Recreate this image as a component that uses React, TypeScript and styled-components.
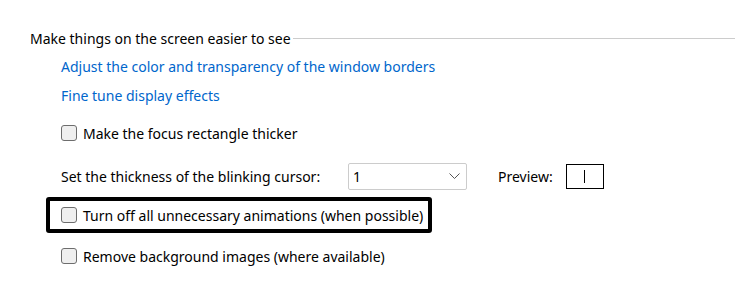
import React, { useState } from 'react';
import styled, { createGlobalStyle } from 'styled-components';

const GlobalStyle = createGlobalStyle`
    body {
        margin: 0;
        background: #ffffff;
        font-family: 'Noto Sans', 'Open Sans', sans-serif;
        font-size: 14px;
        color: #000000;
    }
`;

const Page = styled.div`
    width: 746px;
    height: 289px;
    padding: 28px 11px 0 30px;
    box-sizing: border-box;
`;

const SectionHeader = styled.div`
    display: flex;
    align-items: center;
    gap: 2px;
    height: 20px;
`;

const SectionTitle = styled.span`
    white-space: nowrap;
`;

const Rule = styled.div`
    flex: 1;
    height: 1px;
    background: #cccccc;
`;

const Body = styled.div`
    display: flex;
    flex-direction: column;
    padding-left: 31px;
`;

const Link = styled.a<{ $top: number }>`
    color: #0066cc;
    text-decoration: none;
    height: 20px;
    line-height: 20px;
    margin-top: ${(p) => p.$top}px;
    cursor: pointer;
`;

const CheckRow = styled.label<{ $top: number }>`
    display: flex;
    align-items: center;
    gap: 6px;
    height: 20px;
    margin-top: ${(p) => p.$top}px;
`;

const Highlight = styled.label`
    margin: 7px 0 0 -15px;
    width: 386px;
    height: 36px;
    box-sizing: border-box;
    border: 4px solid #000000;
    border-radius: 3px;
    padding-left: 11px;
    display: flex;
    align-items: center;
    gap: 6px;
`;

const Box = styled.span`
    width: 14px;
    height: 14px;
    border: 1px solid #6d6d6d;
    border-radius: 3px;
    background: #efefef;
    display: inline-flex;
    align-items: center;
    justify-content: center;
    font-size: 11px;
    line-height: 1;
`;

const CursorRow = styled.div`
    display: flex;
    align-items: center;
    height: 27px;
    margin-top: 20px;
`;

const CursorLabel = styled.span`
    width: 287px;
`;

const Select = styled.div`
    width: 119px;
    height: 27px;
    box-sizing: border-box;
    border: 1px solid #cccccc;
    border-radius: 2px;
    display: flex;
    align-items: center;
    justify-content: space-between;
    padding: 0 6px 0 4px;
`;

const PreviewLabel = styled.span`
    margin-left: 31px;
`;

const PreviewBox = styled.div`
    margin-left: 13px;
    width: 38px;
    height: 25px;
    box-sizing: border-box;
    border: 1.5px solid #000000;
    display: flex;
    align-items: center;
    justify-content: center;
`;

const Caret = styled.div`
    width: 1px;
    height: 13px;
    background: #000000;
    margin-right: 1px;
`;

const Checkbox = ({ label, top }: { label: string; top: number }) => {
    const [checked, setChecked] = useState(false);
    return (
        <CheckRow $top={top} onClick={() => setChecked(!checked)}>
            <Box>{checked ? '✓' : ''}</Box>
            <span>{label}</span>
        </CheckRow>
    );
};

const App = () => {
    const [animOff, setAnimOff] = useState(false);

    return (
        <Page>
            <GlobalStyle />
            <SectionHeader>
                <SectionTitle>Make things on the screen easier to see</SectionTitle>
                <Rule />
            </SectionHeader>
            <Body>
                <Link $top={9}>Adjust the color and transparency of the window borders</Link>
                <Link $top={9}>Fine tune display effects</Link>
                <Checkbox top={17} label="Make the focus rectangle thicker" />
                <CursorRow>
                    <CursorLabel>Set the thickness of the blinking cursor:</CursorLabel>
                    <Select>
                        <span>1</span>
                        <svg width="11" height="7" viewBox="0 0 11 7">
                            <path d="M0.5 0.5 L5.5 5.5 L10.5 0.5" fill="none" stroke="#555" strokeWidth="1" />
                        </svg>
                    </Select>
                    <PreviewLabel>Preview:</PreviewLabel>
                    <PreviewBox>
                        <Caret />
                    </PreviewBox>
                </CursorRow>
                <Highlight onClick={() => setAnimOff(!animOff)}>
                    <Box>{animOff ? '✓' : ''}</Box>
                    <span>Turn off all unnecessary animations (when possible)</span>
                </Highlight>
                <Checkbox top={13} label="Remove background images (where available)" />
            </Body>
        </Page>
    );
};

export default App;
